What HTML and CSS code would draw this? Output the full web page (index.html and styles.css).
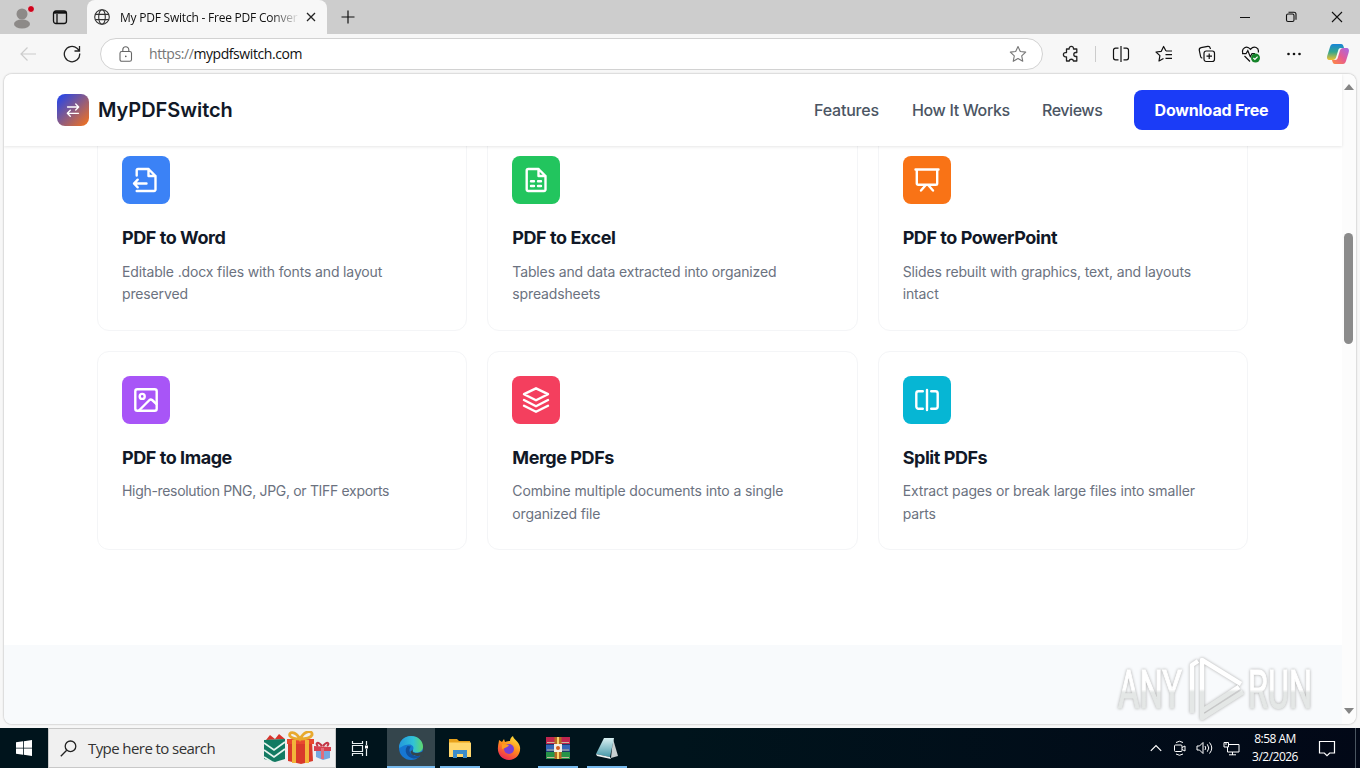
FILE: index.html
```
<!DOCTYPE html>
<html lang="en">
   <head>
      <meta charset="utf-8">
      <meta name="viewport" content="width=device-width, initial-scale=1">
      <title>My PDF Switch - Free PDF Converter</title>
      <link rel="stylesheet" href="styles.css">
   </head>
   <body>
      <div class="titlebar">
        <svg class="profile" width="24" height="24" viewBox="0 0 24 24"><circle cx="12" cy="9" r="5.5" fill="#8d8a88"/><ellipse cx="12" cy="19" rx="8" ry="4.5" fill="#8d8a88"/><circle cx="21" cy="4" r="3.5" fill="#d0021b" stroke="#ddd"/></svg>
        <svg class="workspaces" width="16" height="16" viewBox="0 0 16 16" fill="none" stroke="#111" stroke-width="1.3"><rect x="1.5" y="2" width="13" height="12.5" rx="2.5"/><path d="M2 3.5h12" stroke-width="2.4"/><path d="M5 5v9" stroke-width="1.3"/></svg>
        <div class="tab">
          <svg width="16" height="16" viewBox="0 0 16 16" fill="none" stroke="#333" stroke-width="1.1"><circle cx="8" cy="8" r="7.3"/><ellipse cx="8" cy="8" rx="3.3" ry="7.3"/><path d="M1.3 5.4h13.4M1.3 10.6h13.4"/></svg>
          <div class="tabtitle">My PDF Switch - Free PDF Conver</div>
          <svg width="10" height="10" viewBox="0 0 10 10" stroke="#222" stroke-width="1.3"><path d="M1 1l8 8M9 1l-8 8"/></svg>
        </div>
        <svg class="newtab" width="14" height="14" viewBox="0 0 14 14" stroke="#111" stroke-width="1.2"><path d="M7 .5v13M.5 7h13"/></svg>
        <div class="winbuttons">
          <svg width="12" height="12" viewBox="0 0 12 12" stroke="#111"><path d="M1 6.5h10"/></svg>
          <svg width="12" height="12" viewBox="0 0 12 12" fill="none" stroke="#111" stroke-width="1.1"><rect x="1.5" y="3" width="7.5" height="7.5" rx="1.5"/><path d="M3.5 1.2H9a2 2 0 0 1 2 2V8.7"/></svg>
          <svg width="12" height="12" viewBox="0 0 12 12" stroke="#111" stroke-width="1.1"><path d="M1 1l10 10M11 1L1 11"/></svg>
        </div>
      </div>

      <div class="toolbar">
        <svg class="back" width="18" height="18" viewBox="0 0 18 18" fill="none" stroke="#ccc" stroke-width="1.2"><path d="M17 9H2M8.500 2.500L2 9l6.500 6.500"/></svg>
        <svg class="reload" width="18" height="18" viewBox="0 0 18 18" fill="none" stroke="#222" stroke-width="1.3"><path d="M16.700 8.500a7.700 7.700 0 1 1-2.700-5.300l2.300 2.300M16.500 1v5h-5"/></svg>
        <div class="address">
          <svg width="14" height="16" viewBox="0 0 14 16" fill="none" stroke="#666" stroke-width="1.1"><rect x="1" y="5.500" width="11.500" height="9.800" rx="1.800"/><path d="M3.800 5.500V3.700a3 3 0 0 1 6 0v1.800"/><circle cx="6.800" cy="10.400" r=".8" fill="#555" stroke="none"/></svg>
          <div class="url"><span class="scheme">https://</span>mypdfswitch.com</div>
          <svg width="18" height="18" viewBox="0 0 18 18" fill="none" stroke="#777" stroke-width="1.1" stroke-linejoin="round"><path d="M9 1.500l2.300 5 5.400.6-4 3.700 1.100 5.500L9 13.600l-4.800 2.700 1.100-5.500-4-3.700 5.400-.6z"/></svg>
        </div>
        <div class="tools">
          <svg width="18" height="18" viewBox="0 0 18 18" fill="none" stroke="#222" stroke-width="1.300" stroke-linejoin="round"><path d="M4.500 4h2.700a2.200 2.200 0 1 1 4.300 0h3.300v3.500h-1a2 2 0 0 0 0 4h1v4.500h-3.300a2.200 2.200 0 0 0-4.300 0H4.500v-4.200h-1a2.100 2.100 0 1 1 0-4.200h1z"/></svg>
          <span class="divider"></span>
          <svg width="18" height="18" viewBox="0 0 18 18" fill="none" stroke="#111" stroke-width="1.200"><path d="M9 1v16M6.500 3.200h-3a2 2 0 0 0-2 2v7.600a2 2 0 0 0 2 2h3M11.500 3.200h3a2 2 0 0 1 2 2v7.600a2 2 0 0 1-2 2h-3"/></svg>
          <svg width="18" height="18" viewBox="0 0 18 18" fill="none" stroke="#111" stroke-width="1.200" stroke-linejoin="round"><path d="M11 6L8.600 1.500 6.300 6.300 1 7l3.900 3.600L4 16l4.500-2.500M11 6h6M10.500 9.700H17M10.500 13.300H17"/></svg>
          <svg width="18" height="18" viewBox="0 0 18 18" fill="none" stroke="#111" stroke-width="1.200"><rect x="6" y="6" width="10.500" height="10.500" rx="2.200"/><path d="M11.200 8.500v5.500M8.500 11.200H14M4.300 13.200a2 2 0 0 1-1.700-1.700L1.300 5.300a2.300 2.300 0 0 1 1.800-2.600l6.600-1.300a2.200 2.200 0 0 1 2.500 1.600l.3 1"/></svg>
          <svg width="20" height="18" viewBox="0 0 20 18" fill="none" stroke="#111" stroke-width="1.200"><path d="M1.800 8c-1.500-4.500 3.800-8.500 7.700-3.700C13 0 18.500 2.800 17.200 7.500M3.500 11l5.500 5.500M1 8.700h4l1.800-3 2.500 6 1.700-3h3"/><circle cx="14.500" cy="13" r="4.500" fill="#15842a" stroke="none"/><path d="M12.400 13l1.500 1.500 2.700-2.800" stroke="#fff"/></svg>
          <svg width="14" height="4" viewBox="0 0 14 4" fill="#111"><circle cx="1.500" cy="2" r="1.300"/><circle cx="7" cy="2" r="1.300"/><circle cx="12.500" cy="2" r="1.300"/></svg>
          <svg width="24" height="24" viewBox="0 0 24 24">
            <defs>
              <linearGradient id="copa" x1="0" y1="0" x2="0" y2="1"><stop offset="0" stop-color="#1785d8"/><stop offset=".5" stop-color="#35a68d"/><stop offset="1" stop-color="#f2c230"/></linearGradient>
              <linearGradient id="copb" x1="1" y1="0" x2="0" y2="1"><stop offset="0" stop-color="#a468e8"/><stop offset=".5" stop-color="#e65b92"/><stop offset="1" stop-color="#ff8b3d"/></linearGradient>
            </defs>
            <path d="M7 2h8c2 0 2.500 2 3 4h-3c-2 0-2.500 1-3 3l-1.500 5c-.7 2.500-1.500 4-4 4H4c-3 0-3.500-2-2.500-5l2.500-8c.6-2 1.500-3 3-3z" fill="url(#copa)"/>
            <path d="M17 22H9c-2 0-2.500-2-3-4h3c2 0 2.500-1 3-3l1.500-5c.7-2.500 1.500-4 4-4H20c3 0 3.500 2 2.500 5L20 19c-.6 2-1.500 3-3 3z" fill="url(#copb)"/>
          </svg>
        </div>
      </div>

      <div class="viewport">
        <div class="page">
          <div class="nav">
            <svg class="logo" width="32" height="32" viewBox="0 0 32 32"><defs><linearGradient id="lg" x1="0" y1="0" x2="1" y2="1"><stop offset=".1" stop-color="#3048df"/><stop offset="1" stop-color="#f97316"/></linearGradient></defs><rect width="32" height="32" rx="8" fill="url(#lg)"/><path d="M10.500 13h11M18.700 10l3 3-3 3M21.500 19.300h-11M13.300 16.300l-3 3 3 3" fill="none" stroke="#fff" stroke-width="1.300" stroke-linecap="round" stroke-linejoin="round"/></svg>
            <div class="brand">MyPDFSwitch</div>
            <div class="links">
              <span class="features">Features</span>
              <span class="how">How It Works</span>
              <span class="reviews">Reviews</span>
            </div>
            <div class="download"><span>Download Free</span></div>
          </div>

          <div class="formats">
            <div class="card">
              <div class="icon blue"><svg width="28" height="28" viewBox="0 0 28 28"><path d="M4.700 9.500V4.300a1.300 1.300 0 0 1 1.300-1.300H16.500l7 7v13.500a1.500 1.500 0 0 1-1.500 1.500H4.700M16.500 3v7h7M14.500 17.500H2M5.700 13.700L2 17.500l3.700 3.800"/></svg></div>
              <div class="name">PDF to Word</div>
              <div class="desc">Editable .docx files with fonts and layout<br>preserved</div>
            </div>
            <div class="card">
              <div class="icon green"><svg width="28" height="28" viewBox="0 0 28 28"><path d="M4.700 4.500a1.500 1.500 0 0 1 1.500-1.500H16.500l7 7v13.500a1.500 1.500 0 0 1-1.500 1.500H6.200a1.500 1.500 0 0 1-1.500-1.500zM16.500 3v7h7M9 15.300h3M16 15.300h3M9 20h3M16 20h3"/></svg></div>
              <div class="name">PDF to Excel</div>
              <div class="desc">Tables and data extracted into organized<br>spreadsheets</div>
            </div>
            <div class="card">
              <div class="icon orange"><svg width="28" height="28" viewBox="0 0 28 28"><path d="M2.500 3.500h23M3.800 3.500v14a1.300 1.300 0 0 0 1.300 1.300h17.800a1.300 1.300 0 0 0 1.300-1.300v-14M12.800 19l-4.800 5.500M15.200 19l4.800 5.500"/></svg></div>
              <div class="name">PDF to PowerPoint</div>
              <div class="desc">Slides rebuilt with graphics, text, and layouts<br>intact</div>
            </div>
            <div class="card">
              <div class="icon purple"><svg width="28" height="28" viewBox="0 0 28 28"><rect x="3.300" y="3.300" width="21.400" height="21.400" rx="2"/><circle cx="10.200" cy="10.400" r="2.500"/><path d="M7 24.500L17.500 14a2 2 0 0 1 2.600 0l4.400 4"/></svg></div>
              <div class="name">PDF to Image</div>
              <div class="desc tight">High-resolution PNG, JPG, or TIFF exports</div>
            </div>
            <div class="card">
              <div class="icon red"><svg width="28" height="28" viewBox="0 0 28 28"><path d="M14 2.300L26 8.200 14 14.200 2 8.200zM2 14l12 6.200L26 14M2 19.700l12 6.100 12-6.100"/></svg></div>
              <div class="name">Merge PDFs</div>
              <div class="desc">Combine multiple documents into a single<br>organized file</div>
            </div>
            <div class="card">
              <div class="icon cyan"><svg width="28" height="28" viewBox="0 0 28 28"><path d="M14 4v20M9.800 5.300H5.500a2.200 2.200 0 0 0-2.200 2.200v13a2.200 2.200 0 0 0 2.200 2.200h4.300M18.200 5.300h4.300a2.200 2.200 0 0 1 2.200 2.200v13a2.200 2.200 0 0 1-2.200 2.200h-4.300"/></svg></div>
              <div class="name">Split PDFs</div>
              <div class="desc">Extract pages or break large files into smaller<br>parts</div>
            </div>
          </div>

          <div class="nextsection"></div>
        </div>
        <div class="scrollbar">
          <span class="up"></span>
          <span class="thumb"></span>
          <span class="down"></span>
        </div>
        <svg class="watermark" width="210" height="68" viewBox="0 0 210 68">
          <defs><linearGradient id="wm" x1="0" y1="0" x2="0" y2="1"><stop offset=".5" stop-color="#fff"/><stop offset=".55" stop-color="#e4e7e6"/></linearGradient></defs>
          <g fill="url(#wm)" stroke="url(#wm)" stroke-width="1.200" font-family="Roboto" font-size="54">
            <text x="4" y="53" textLength="64" lengthAdjust="spacingAndGlyphs">ANY</text>
            <text x="134" y="53" textLength="64" lengthAdjust="spacingAndGlyphs">RUN</text>
          </g>
          <g fill="none" stroke="url(#wm)" stroke-width="4.500" stroke-linejoin="round"><path d="M88 59V5l39 24M125 32L88 56v7l41-26M78 58V10l6-4"/></g>
        </svg>
      </div>

      <div class="taskbar">
        <div class="start"><svg width="16" height="16" viewBox="0 0 16 16" fill="#fff"><path d="M0 2.300L7 1.300v6.400H0zM7.800 1.200L16 0v7.700H7.800zM0 8.500h7v6.300l-7-1zM7.800 8.500H16V16l-8.200-1.200z"/></svg></div>
        <div class="search">
          <svg width="17" height="17" viewBox="0 0 17 17" fill="none" stroke="#222" stroke-width="1.300"><circle cx="10.500" cy="6.300" r="5.300"/><path d="M6.700 10.200L.8 16.200"/></svg>
          <div class="searchtext">Type here to search</div>
          <svg class="gifts" width="68" height="34" viewBox="0 0 68 34">
            <path d="M2 9l4-5 5 4 4-5 6 5z" fill="#d8332c"/><path d="M0 9l21-1v20l-10 3L0 28z" fill="#127a62"/><path d="M0 12l10 7 11-8M0 19l10 7 11-8M0 26l8 5" fill="none" stroke="#e6f4ee" stroke-width="1.800"/>
            <path d="M24 10h24l1 20-12 3-13-3z" fill="#d93a2b"/><path d="M23 8h27v5H23z" fill="#e8482f"/><path d="M28 9h4v23h-4zM41 9h4v23h-4z" fill="#f2b53a"/><path d="M36 8C31-1 24 1 26 5c2 3 6 3 10 3 4 0 10 0 12-4 1-5-7-5-12 4z" fill="none" stroke="#e8a92e" stroke-width="2.800"/>
            <path d="M52 17h14v10l-7 2-7-3z" fill="#75a7df"/><path d="M50 15l17 1v4H50z" fill="#d6414f"/><path d="M57 17h3v11h-3z" fill="#e26d7b"/><path d="M58 15c-5-6-7-2-4 0M59 15c5-6 7-2 4 0" fill="none" stroke="#c23343" stroke-width="2"/>
          </svg>
        </div>
        <div class="taskview"><svg width="18" height="17" viewBox="0 0 18 17" fill="none" stroke="#e8eef0" stroke-width="1.200"><path d="M1.500 1v2.500h10V1M1.500 16v-2.500h10V16M1.500 5.500h10v6h-10zM15.500 1v4M15.500 9v7"/><path d="M14 5.500h3v3h-3z" fill="#fff" stroke="none"/></svg></div>
        <div class="apps">
          <div class="app active">
            <svg width="26" height="26" viewBox="0 0 26 26">
              <defs><linearGradient id="ed" x1="0" y1="0" x2="1" y2="0"><stop offset="0" stop-color="#2397dc"/><stop offset=".6" stop-color="#31c2d6"/><stop offset="1" stop-color="#5fd869"/></linearGradient></defs>
              <circle cx="13" cy="13" r="12" fill="#1677d2"/><path d="M1 13C1 6 6 1 13 1c7 0 12 5 12 10.500 0 4-3 6-6.500 6-3 0-4.300-1.300-3.300-3 1-2.500-.7-5-4.200-5C6 9.500 2 13 1 13z" fill="url(#ed)"/><path d="M9.500 11c-4 4-1 11.500 6 12.500 3 .3 5.500-1 7.500-3-4 1.500-9 .5-11-3-1-2-.7-4 1-6z" fill="#12509b"/><path d="M15 14.500c-1.500 3 2 4.200 6 3.200l4.500-1.500v5l-4-.5c-5 1-9-1-9-4.200z" fill="#34454c"/>
            </svg>
          </div>
          <div class="app open"><svg width="24" height="22" viewBox="0 0 24 22"><path d="M1 2h8l2 2h11v16H1z" fill="#e7a11b"/><path d="M1 5.500h22V20H1z" fill="#ffd76d"/><path d="M5 13h14v8h-4v-4H9v4H5z" fill="#3a8ccb"/></svg></div>
          <div class="app">
            <svg width="26" height="26" viewBox="0 0 26 26"><defs><linearGradient id="ff" x1=".8" y1="0" x2=".3" y2="1"><stop offset="0" stop-color="#ffe83d"/><stop offset=".5" stop-color="#ff8a1d"/><stop offset="1" stop-color="#ee2457"/></linearGradient></defs><path d="M3 5l3 2 2-3 1 3c2-1 4-1 5-1 0-2 1-4 3-5 0 3 6 5 7 11 1 7-4 13-11 13S1 19 2 12c0-3 1-5 1-7z" fill="url(#ff)"/><circle cx="13" cy="14" r="5" fill="#793fd4"/><path d="M6 9c3 0 4 1 7 1-1 2-3 2-4 3l-3 1z" fill="#ff9c20"/></svg>
          </div>
          <div class="app open"><svg width="26" height="24" viewBox="0 0 26 24"><rect x="1" y="1" width="24" height="7" fill="#c0264f"/><rect x="1" y="8.500" width="24" height="7" fill="#3565b7"/><rect x="1" y="16" width="24" height="7" fill="#269448"/><path d="M2 6.500h22M2 14h22M2 21.500h22" stroke="#c9b79a"/><path d="M9.500 1h7v22h-7z" fill="#b46a25"/><path d="M9 8h8v8H9z" fill="#f1eee5"/><path d="M13 1v7M13 16v7" stroke="#f7d46b" stroke-width="2"/><circle cx="13" cy="12" r="2" fill="#d45a21"/></svg></div>
          <div class="app open"><svg width="26" height="24" viewBox="0 0 26 24"><defs><linearGradient id="np" x1="0" y1="0" x2="0" y2="1"><stop offset="0" stop-color="#d9f0f2"/><stop offset="1" stop-color="#4598a8"/></linearGradient></defs><path d="M19 3l5 17-7 2z" fill="#c8cfd0"/><path d="M10 2h10l-4 19-14-3z" fill="url(#np)"/><path d="M2 18l14 3 1 2-14-3z" fill="#edf3f3"/></svg></div>
        </div>
        <div class="tray">
          <svg width="12" height="8" viewBox="0 0 12 8" fill="none" stroke="#fff" stroke-width="1.200"><path d="M.8 6.800L6 1.500l5.200 5.300"/></svg>
          <svg width="14" height="16" viewBox="0 0 14 16" fill="none" stroke="#fff"><rect x="1.500" y="5" width="7.500" height="6.500" rx="1"/><path d="M9 7.500l3-1.500v5l-3-1.500M3 2.500q3.500-2.500 7 0M3 14q3.500 2.500 7 0"/></svg>
          <svg width="18" height="14" viewBox="0 0 18 14" fill="none" stroke="#fff"><path d="M1 5h2.500L7 1.500v11L3.500 9H1zM9 5q1.500 2 0 4M11.300 3.300q3 3.700 0 7.400M13.500 1.500q4.500 5.500 0 11"/></svg>
          <svg width="17" height="15" viewBox="0 0 17 15" fill="none" stroke="#fff"><path d="M6 3.500h10v7.500H4.500V6M9.500 11v3M6 13.800h7M1 1.500h4.500V6H1zM3 1.500V4"/></svg>
          <div class="clock"><span>8:58 AM</span><span>3/2/2026</span></div>
          <svg width="18" height="17" viewBox="0 0 18 17" fill="none" stroke="#fff" stroke-width="1.200"><path d="M1.500 1.500h15v11.500h-4.800L9 15.700 6.300 13H1.500z"/></svg>
          <span class="showdesktop"></span>
        </div>
      </div>
   </body>
</html>
```
FILE: styles.css
```
* {
  box-sizing: border-box;
}
body {
  width: 1360px;
  height: 768px;
  margin: 0;
  overflow: hidden;
  display: flex;
  flex-direction: column;
  background: #f7f7f7;
  font-family: "Open Sans", sans-serif;
  color: #111;
  white-space: nowrap;
}
svg {
  flex: none;
  display: block;
}
.titlebar {
  height: 34px;
  flex: none;
  display: flex;
  align-items: center;
  background: #cdcdcd;
}
.profile {
  margin-left: 10px;
}
.workspaces {
  margin-left: 18px;
}
.tab {
  width: 240px;
  height: 34px;
  margin-left: 19px;
  padding: 0 11px 0 7px;
  display: flex;
  align-items: center;
  background: #f7f7f7;
  border-radius: 8px 8px 0 0;
}
.tabtitle {
  flex: 1;
  margin: 0 6px 0 10px;
  font-size: 12px;
  letter-spacing: -0.22px;
  -webkit-mask-image: linear-gradient(to right, #000 84%, transparent);
  mask-image: linear-gradient(to right, #000 84%, transparent);
}
.newtab {
  margin-left: 14px;
}
.winbuttons {
  margin: 0 17px 0 auto;
  display: flex;
  gap: 34px;
}
.toolbar {
  height: 40px;
  flex: none;
  display: flex;
  align-items: center;
  background: #f7f7f7;
}
.back {
  margin-left: 19px;
}
.reload {
  margin-left: 26px;
}
.address {
  width: 943px;
  height: 32px;
  margin-left: 19px;
  padding: 0 15px 0 18px;
  display: flex;
  align-items: center;
  background: #fff;
  border: 1px solid #d2d2d2;
  border-radius: 16px;
}
.url {
  flex: 1;
  margin-left: 16px;
  padding-bottom: 1px;
  font-size: 14px;
  letter-spacing: -0.42px;
}
.scheme {
  color: #767676;
}
.tools {
  flex: 1;
  margin-left: 19px;
  padding-right: 10px;
  display: flex;
  align-items: center;
  justify-content: space-between;
}
.divider {
  width: 1px;
  height: 16px;
  margin: 0 -10px;
  background: #ccc;
}
.viewport {
  position: relative;
  width: 1352px;
  height: 650px;
  flex: none;
  margin-left: 4px;
  display: flex;
  overflow: hidden;
  background: #fff;
  border-radius: 8px;
  box-shadow: 0 0 2px #999;
}
.page {
  width: 1338px;
  flex: none;
  display: flex;
  flex-direction: column;
  font-family: Inter, sans-serif;
}
.nav {
  position: relative;
  z-index: 1;
  height: 72px;
  flex: none;
  padding: 0 53px;
  display: flex;
  align-items: center;
  background: #fff;
  box-shadow: 0 1px 3px rgba(0, 0, 0, 0.1);
}
.brand {
  margin-left: 9px;
  font-size: 20px;
  font-weight: 600;
  letter-spacing: -0.05px;
  color: #111827;
}
.links {
  margin-left: auto;
  display: flex;
  gap: 32px;
  font-size: 16px;
  font-weight: 500;
  color: #4b5563;
}
.links span {
  letter-spacing: -0.2px;
}
.features {
  width: 66px;
}
.links .how {
  width: 98px;
  letter-spacing: -0.35px;
}
.links .reviews {
  width: 60px;
  letter-spacing: -0.45px;
}
.download {
  width: 155px;
  height: 40px;
  margin-left: 32px;
  display: flex;
  align-items: center;
  justify-content: center;
  background: #1b3cf7;
  border-radius: 8px;
  color: #fff;
  font-size: 16px;
  font-weight: 700;
  letter-spacing: -0.2px;
}
/* the grid is scrolled a little way under the nav */
.formats {
  margin: -15px 94px 95px 93px;
  display: grid;
  grid-template-columns: repeat(3, 1fr);
  gap: 20px;
}
.card {
  height: 199.6px;
  padding: 24px;
  background: #fff;
  border: 1px solid #f4f5f7;
  border-radius: 12px;
}
.icon {
  width: 48px;
  height: 48px;
  display: flex;
  align-items: center;
  justify-content: center;
  border-radius: 8px;
}
.icon svg {
  fill: none;
  stroke: #fff;
  stroke-width: 2.4;
  stroke-linecap: round;
  stroke-linejoin: round;
}
.blue {
  background: #3b82f6;
}
.green {
  background: #22c55e;
}
.orange {
  background: #f97316;
}
.purple {
  background: #a855f7;
}
.red {
  background: #f43f5e;
}
.cyan {
  background: #06b6d4;
}
.name {
  margin: 20px 0 8px;
  font-size: 18px;
  font-weight: 700;
  line-height: 28.8px;
  letter-spacing: -0.45px;
  color: #111827;
}
.desc {
  font-size: 14px;
  line-height: 22.4px;
  letter-spacing: -0.14px;
  color: #6b7280;
}
.tight {
  letter-spacing: -0.32px;
}
.nextsection {
  flex: 1;
  background: #f8fafc;
}
.scrollbar {
  width: 14px;
  padding: 10px 3px 10px 2px;
  display: flex;
  flex-direction: column;
  align-items: center;
  background: #fcfcfc;
}
.up {
  border: 5px solid transparent;
  border-top: 0;
  border-bottom: 6px solid #858585;
}
.thumb {
  width: 9px;
  height: 111px;
  margin-top: 143px;
  background: #8b8b8b;
  border-radius: 5px;
}
.down {
  margin-top: auto;
  border: 5px solid transparent;
  border-bottom: 0;
  border-top: 6px solid #858585;
}
.watermark {
  position: absolute;
  left: 1110px;
  top: 581px;
  z-index: 2;
  filter: drop-shadow(0 0 1.5px #aaa);
}
.taskbar {
  height: 40px;
  flex: none;
  margin-top: 4px;
  display: flex;
  background: linear-gradient(to right, #00141c, #00141c 50%, #020817);
}
.start, .taskview {
  width: 48px;
  display: flex;
  align-items: center;
  justify-content: center;
}
.search {
  width: 288px;
  padding: 0 3px 0 11px;
  display: flex;
  align-items: center;
  background: #f0f0f0;
  border: 1px solid #c8c8c8;
}
.searchtext {
  margin-left: 11px;
  font-size: 15px;
  letter-spacing: -0.58px;
  color: #333;
}
.gifts {
  margin-left: auto;
}
.apps {
  margin-left: 3px;
  display: flex;
  gap: 1px;
}
.app {
  width: 48px;
  display: flex;
  align-items: center;
  justify-content: center;
}
.active {
  background: #34454c;
  box-shadow: inset 0 -2px #76b9ed;
}
.open {
  background: linear-gradient(#76b9ed, #76b9ed) center bottom / 40px 2px no-repeat;
}
.tray {
  margin-left: auto;
  display: flex;
  align-items: center;
  gap: 9px;
}
.tray svg:first-child {
  margin-right: 2px;
}
.clock {
  width: 52px;
  margin: 0 8px 0 0;
  display: flex;
  flex-direction: column;
  align-items: center;
  font-size: 12px;
  line-height: 18px;
  letter-spacing: -0.5px;
  color: #fff;
}
.showdesktop {
  width: 5px;
  height: 40px;
  margin-left: 10px;
  border-left: 1px solid #4a5560;
}
```
